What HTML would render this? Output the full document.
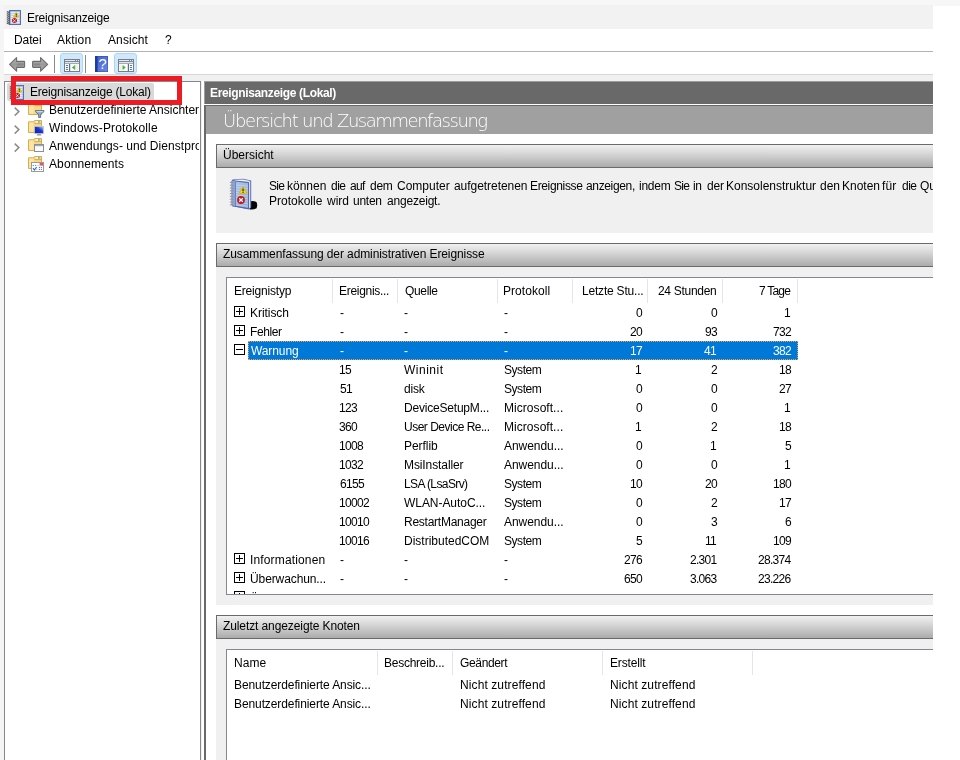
<!DOCTYPE html>
<html lang="de">
<head>
<meta charset="utf-8">
<title>Ereignisanzeige</title>
<style>
html,body{margin:0;padding:0;background:#fff;}
body{width:960px;height:760px;overflow:hidden;font-family:'Liberation Sans',sans-serif;font-size:12px;line-height:16px;color:#000;}
#app{position:relative;will-change:transform;width:960px;height:760px;overflow:hidden;background:#fff;}
#app div, #app i, #app svg, #app span.w{position:absolute;}
.t{white-space:nowrap;}
#topstrip{left:0;top:0;width:960px;height:6px;background:#f7f7f7;}
#leftstrip{left:0;top:5px;width:4px;height:755px;background:#f5f5f5;}
#win{left:4px;top:5px;width:929px;height:76px;background:#fff;}
#titlebar{left:0;top:0;width:929px;height:24px;background:#f2f2f2;}
#menubar{left:0;top:24px;width:929px;height:22px;background:#fff;border-bottom:1px solid #b2b2b2;}
#toolbar{left:0;top:47px;width:929px;height:22px;background:#fff;}
#band{left:0;top:69px;width:929px;height:7px;background:#f0f0f0;box-sizing:border-box;border-top:1px solid #d6d6d6;}
#tree{left:4px;top:81px;width:195px;height:700px;border:1px solid #828790;background:#fff;overflow:hidden;}
#treeclip{left:0;top:0;width:194px;height:700px;overflow:hidden;}
#treesel{left:2px;top:1px;width:147px;height:18px;background:#d9d9d9;border-radius:2px;}
#split{left:201px;top:81px;width:3px;height:679px;background:linear-gradient(to right,#f0f0f0 0,#f0f0f0 1px,#fff 1px);}
#right{left:204px;top:81px;width:729px;height:679px;background:#fff;overflow:hidden;}
#rhead{left:0;top:0;width:729px;height:23px;background:#696969;box-sizing:border-box;border-left:1px solid #9c9c9c;border-top:1px solid #9c9c9c;}
#rline{left:0;top:23px;width:729px;height:1px;background:#fff;}
#rbody{left:0;top:24px;width:729px;height:655px;border-left:2px solid #696969;border-top:1px solid #696969;box-sizing:border-box;background:#fff;}
#rtitle{left:2px;top:25px;width:727px;height:28px;background:#a0a0a0;}
.shead{left:12px;width:740px;height:22px;border:1px solid #6a6a6a;background:linear-gradient(to bottom,#f1f1f1 0%,#cfcfcf 50%,#ababab 100%);}
.sbody{left:12px;width:740px;background:#f0f0f0;}
.lv{left:22px;width:740px;border:1px solid #828790;background:#fff;overflow:hidden;}
.sep{width:1px;background:#e5e5e5;}
#selrow{left:21px;top:63px;width:550px;height:19px;background:#0078d7;box-sizing:border-box;border:1px dotted #e8a15a;}
.xb{width:9px;height:9px;border:1px solid #000;background:#fff;}
.xb .h{left:1px;top:4px;width:7px;height:1px;background:#000;}
.xb .v{left:4px;top:1px;width:1px;height:7px;background:#000;}
#redbox{left:11px;top:76px;width:161px;height:19px;border:5px solid #ed1c24;}
.tsep{top:3px;width:1px;height:18px;background:#8a8a8a;}
.tbtn{top:1px;width:21px;height:19px;border:1px solid #a6d8ff;border-radius:3px;background:#cfe8fc;}

</style>
</head>
<body>
<div id="app">
<div id="topstrip"></div>
<div id="leftstrip"></div>
<div id="win">
<div id="titlebar"></div>
<div id="menubar"></div>
<div id="toolbar">
<svg style="left:5px;top:5px" width="17" height="15" viewBox="0 0 17 15" ><defs><linearGradient id="ag1" x1="0" y1="0" x2="0" y2="1"><stop offset="0" stop-color="#b6b6b6"/><stop offset=".5" stop-color="#9a9a9a"/><stop offset="1" stop-color="#ababab"/></linearGradient></defs><g ><path d="M0.6 7.4 L7.6 0.6 L7.6 4.4 L15 4.4 Q15.6 4.4 15.6 5 L15.6 9.8 Q15.6 10.4 15 10.4 L7.6 10.4 L7.6 14.2 Z" fill="url(#ag1)" stroke="#6c6c6c" stroke-width="1.1" stroke-linejoin="round"/><rect x="8" y="6.4" width="6.4" height="2" fill="#7b7b7b" opacity=".6"/></g></svg><svg style="left:28px;top:5px" width="17" height="15" viewBox="0 0 17 15" ><defs><linearGradient id="ag0" x1="0" y1="0" x2="0" y2="1"><stop offset="0" stop-color="#b6b6b6"/><stop offset=".5" stop-color="#9a9a9a"/><stop offset="1" stop-color="#ababab"/></linearGradient></defs><g transform="translate(16.2,0) scale(-1,1)"><path d="M0.6 7.4 L7.6 0.6 L7.6 4.4 L15 4.4 Q15.6 4.4 15.6 5 L15.6 9.8 Q15.6 10.4 15 10.4 L7.6 10.4 L7.6 14.2 Z" fill="url(#ag0)" stroke="#6c6c6c" stroke-width="1.1" stroke-linejoin="round"/><rect x="8" y="6.4" width="6.4" height="2" fill="#7b7b7b" opacity=".6"/></g></svg><div class="tsep" style="left:50px"></div><div class="tbtn" style="left:56px"></div><svg style="left:60px;top:7px" width="16" height="13" viewBox="0 0 16 13" ><rect x="0.5" y="0.5" width="15" height="12" fill="#fff" stroke="#7d7d7d"/><rect x="1" y="1" width="14" height="1.2" fill="#e6e9ee"/><rect x="1" y="2.2" width="14" height="1" fill="#5d6d8e"/><rect x="1" y="3.2" width="14" height="1" fill="#dfe3ea"/><rect x="1" y="4.2" width="14" height=".8" fill="#8e98ac"/><rect x="11" y="1" width="1" height="1.2" fill="#7d88a3"/><rect x="13" y="1" width="1" height="1.2" fill="#7d88a3"/><rect x="5" y="5" width="1.2" height="7" fill="#5d6d8e"/><rect x="1.8" y="5.9" width="2.4" height="1.1" rx=".5" fill="#3a7bc8"/><rect x="1.8" y="7.9" width="2.4" height="1.1" rx=".5" fill="#3a7bc8"/><rect x="1.8" y="9.9" width="2.4" height="1.1" rx=".5" fill="#3a7bc8"/><rect x="10.6" y="5.4" width="3.6" height="6" fill="#f0f0f0"/><path d="M10.8 6.4 L10.8 10.6 L8.2 8.5 Z" fill="#3ab535" stroke="#3ab535" stroke-width=".5" stroke-linejoin="round"/></svg><div class="tsep" style="left:81px"></div><svg style="left:91px;top:4px" width="13" height="16" viewBox="0 0 13 16" ><defs><linearGradient id="hg" x1="0" y1="0" x2="1" y2="1"><stop offset="0" stop-color="#3f60cf"/><stop offset="1" stop-color="#6c8ae0"/></linearGradient></defs><rect x="0" y="0" width="13" height="16" fill="url(#hg)"/><rect x="0" y="0" width="2.6" height="16" fill="#1c3aa4"/><rect x="0" y="0" width="13" height="16" fill="none" stroke="#2440a8" stroke-width=".8"/><text x="7.6" y="13.2" font-family="Liberation Sans, sans-serif" font-size="15" fill="#fff" text-anchor="middle">?</text></svg><div class="tbtn" style="left:110px"></div><svg style="left:114px;top:7px" width="16" height="13" viewBox="0 0 16 13" ><rect x="0.5" y="0.5" width="15" height="12" fill="#fff" stroke="#7d7d7d"/><rect x="1" y="1" width="14" height="1.2" fill="#e6e9ee"/><rect x="1" y="2.2" width="14" height="1" fill="#5d6d8e"/><rect x="1" y="3.2" width="14" height="1" fill="#dfe3ea"/><rect x="1" y="4.2" width="14" height=".8" fill="#8e98ac"/><rect x="11" y="1" width="1" height="1.2" fill="#7d88a3"/><rect x="13" y="1" width="1" height="1.2" fill="#7d88a3"/><rect x="9.8" y="5" width="1.2" height="7" fill="#5d6d8e"/><rect x="11.8" y="5.9" width="2.4" height="1.1" rx=".5" fill="#3a7bc8"/><rect x="11.8" y="7.9" width="2.4" height="1.1" rx=".5" fill="#3a7bc8"/><rect x="11.8" y="9.9" width="2.4" height="1.1" rx=".5" fill="#3a7bc8"/><rect x="1.4" y="5.4" width="2.4" height="6" fill="#f0f0f0"/><path d="M4.8 6.4 L4.8 10.6 L7.4 8.5 Z" fill="#3ab535" stroke="#3ab535" stroke-width=".5" stroke-linejoin="round"/></svg>
</div>
<div id="band"></div>
</div>
<svg style="left:6px;top:10px" width="16" height="16" viewBox="0 0 16 16" ><rect x="3" y="0" width="12" height="15" fill="#5c6ea8"/><rect x="4.2" y="1" width="9.8" height="13" fill="#a4bfe8"/><rect x="4.8" y="2.2" width="8.6" height="1.1" fill="#ffffff" opacity=".9"/><rect x="4.8" y="4.2" width="8.6" height="1.1" fill="#ffffff" opacity=".9"/><rect x="4.8" y="6.2" width="8.6" height="1.1" fill="#ffffff" opacity=".9"/><rect x="4.8" y="8.2" width="8.6" height="1.1" fill="#ffffff" opacity=".9"/><rect x="4.8" y="10.2" width="8.6" height="1.1" fill="#ffffff" opacity=".9"/><rect x="4.8" y="12.2" width="8.6" height="1.1" fill="#ffffff" opacity=".9"/><path d="M0.8 1.6 L3.8 2.6" stroke="#5a5a5a" stroke-width="1.15" fill="none"/><path d="M0.8 3.6 L3.8 4.6" stroke="#5a5a5a" stroke-width="1.15" fill="none"/><path d="M0.8 5.6 L3.8 6.6" stroke="#5a5a5a" stroke-width="1.15" fill="none"/><path d="M0.8 7.6 L3.8 8.6" stroke="#5a5a5a" stroke-width="1.15" fill="none"/><path d="M0.8 9.6 L3.8 10.6" stroke="#5a5a5a" stroke-width="1.15" fill="none"/><path d="M0.8 11.6 L3.8 12.6" stroke="#5a5a5a" stroke-width="1.15" fill="none"/><path d="M0.8 13.2 L3.8 14.2" stroke="#5a5a5a" stroke-width="1.15" fill="none"/><path d="M10.2 2.2 L12.9 7 L7.5 7 Z" fill="#f2d319" stroke="#e0bd10" stroke-width=".8" stroke-linejoin="round"/><rect x="9.8" y="3.6" width=".9" height="2" fill="#1a1a1a"/><rect x="9.8" y="6" width=".9" height=".8" fill="#1a1a1a"/><circle cx="8.5" cy="10.6" r="2.5" fill="#c8141e"/><path d="M7.3 9.6 L9.5 11.7 M9.5 9.6 L7.3 11.7" stroke="#fff" stroke-width="1" fill="none"/></svg>
<div class="t" style="top:10px;left:27px;letter-spacing:-0.20px;">Ereignisanzeige</div>
<div class="t" style="top:32px;left:14px;letter-spacing:-0.10px;">Datei</div>
<div class="t" style="top:32px;left:57px;letter-spacing:0.15px;">Aktion</div>
<div class="t" style="top:32px;left:108px;letter-spacing:0.10px;">Ansicht</div>
<div class="t" style="top:32px;left:165px;">?</div>
<div id="tree">
<div id="treeclip">
<div id="treesel"></div>
<svg style="left:4px;top:3px" width="16" height="16" viewBox="0 0 16 16" ><rect x="3" y="0" width="12" height="15" fill="#5c6ea8"/><rect x="4.2" y="1" width="9.8" height="13" fill="#a4bfe8"/><rect x="4.8" y="2.2" width="8.6" height="1.1" fill="#ffffff" opacity=".9"/><rect x="4.8" y="4.2" width="8.6" height="1.1" fill="#ffffff" opacity=".9"/><rect x="4.8" y="6.2" width="8.6" height="1.1" fill="#ffffff" opacity=".9"/><rect x="4.8" y="8.2" width="8.6" height="1.1" fill="#ffffff" opacity=".9"/><rect x="4.8" y="10.2" width="8.6" height="1.1" fill="#ffffff" opacity=".9"/><rect x="4.8" y="12.2" width="8.6" height="1.1" fill="#ffffff" opacity=".9"/><path d="M0.8 1.6 L3.8 2.6" stroke="#5a5a5a" stroke-width="1.15" fill="none"/><path d="M0.8 3.6 L3.8 4.6" stroke="#5a5a5a" stroke-width="1.15" fill="none"/><path d="M0.8 5.6 L3.8 6.6" stroke="#5a5a5a" stroke-width="1.15" fill="none"/><path d="M0.8 7.6 L3.8 8.6" stroke="#5a5a5a" stroke-width="1.15" fill="none"/><path d="M0.8 9.6 L3.8 10.6" stroke="#5a5a5a" stroke-width="1.15" fill="none"/><path d="M0.8 11.6 L3.8 12.6" stroke="#5a5a5a" stroke-width="1.15" fill="none"/><path d="M0.8 13.2 L3.8 14.2" stroke="#5a5a5a" stroke-width="1.15" fill="none"/><path d="M10.2 2.2 L12.9 7 L7.5 7 Z" fill="#f2d319" stroke="#e0bd10" stroke-width=".8" stroke-linejoin="round"/><rect x="9.8" y="3.6" width=".9" height="2" fill="#1a1a1a"/><rect x="9.8" y="6" width=".9" height=".8" fill="#1a1a1a"/><circle cx="8.5" cy="10.6" r="2.5" fill="#c8141e"/><path d="M7.3 9.6 L9.5 11.7 M9.5 9.6 L7.3 11.7" stroke="#fff" stroke-width="1" fill="none"/></svg><svg style="left:9px;top:25px" width="6" height="10" viewBox="0 0 6 10" ><path d="M0.7 0.6 L4.9 4.6 L0.7 8.6" fill="none" stroke="#8c8c8c" stroke-width="1.5"/></svg><svg style="left:23px;top:20px" width="14" height="13" viewBox="0 0 14 13" ><path d="M0.5 1.8 L6 1.8 L6.6 0.5 L13.5 0.5 L13.5 12.5 L0.5 12.5 Z" fill="#f6d887" stroke="#d6ae4c" stroke-width="1"/><path d="M1.2 2.6 L5.6 2.6 L5.6 11.8 L1.2 11.8 Z" fill="#fbe6a6"/><path d="M6.4 3.6 L13 3.6" stroke="#d6ae4c" stroke-width="1"/><rect x="7.6" y="1.2" width="4.2" height="1.3" rx=".6" fill="#fff"/><rect x="10" y="1.2" width="1.8" height="1.3" rx=".6" fill="#2f8be0"/></svg><svg style="left:30px;top:28px" width="10" height="8" viewBox="0 0 10 8" ><path d="M0.4 0.6 L9 0.6 L9 1.6 L5.6 4.6 L5.6 7.6 L3.6 7.6 L3.6 4.6 L0.4 1.6 Z" fill="#93adc8" stroke="#50708f" stroke-width=".9" stroke-linejoin="round"/><path d="M1.6 1.6 L7.8 1.6" stroke="#e6eef6" stroke-width=".8"/></svg><svg style="left:9px;top:43px" width="6" height="10" viewBox="0 0 6 10" ><path d="M0.7 0.6 L4.9 4.6 L0.7 8.6" fill="none" stroke="#8c8c8c" stroke-width="1.5"/></svg><svg style="left:23px;top:38px" width="14" height="13" viewBox="0 0 14 13" ><path d="M0.5 1.8 L6 1.8 L6.6 0.5 L13.5 0.5 L13.5 12.5 L0.5 12.5 Z" fill="#f6d887" stroke="#d6ae4c" stroke-width="1"/><path d="M1.2 2.6 L5.6 2.6 L5.6 11.8 L1.2 11.8 Z" fill="#fbe6a6"/><path d="M6.4 3.6 L13 3.6" stroke="#d6ae4c" stroke-width="1"/><rect x="7.6" y="1.2" width="4.2" height="1.3" rx=".6" fill="#fff"/><rect x="10" y="1.2" width="1.8" height="1.3" rx=".6" fill="#2f8be0"/></svg><svg style="left:29px;top:44px" width="10" height="10" viewBox="0 0 10 10" ><defs><linearGradient id="mg" x1="0" y1="1" x2="1" y2="0"><stop offset="0" stop-color="#0a1fb0"/><stop offset=".55" stop-color="#1a36d0"/><stop offset="1" stop-color="#c8dcf8"/></linearGradient></defs><rect x="0.4" y="0.4" width="9.2" height="7.2" fill="url(#mg)" stroke="#c4c8cc" stroke-width=".8"/><path d="M3.6 8 L6.6 8 L7.6 9.4 L2.4 9.4 Z" fill="#9a9a9a"/></svg><svg style="left:9px;top:61px" width="6" height="10" viewBox="0 0 6 10" ><path d="M0.7 0.6 L4.9 4.6 L0.7 8.6" fill="none" stroke="#8c8c8c" stroke-width="1.5"/></svg><svg style="left:23px;top:56px" width="14" height="13" viewBox="0 0 14 13" ><path d="M0.5 1.8 L6 1.8 L6.6 0.5 L13.5 0.5 L13.5 12.5 L0.5 12.5 Z" fill="#f6d887" stroke="#d6ae4c" stroke-width="1"/><path d="M1.2 2.6 L5.6 2.6 L5.6 11.8 L1.2 11.8 Z" fill="#fbe6a6"/><path d="M6.4 3.6 L13 3.6" stroke="#d6ae4c" stroke-width="1"/><rect x="7.6" y="1.2" width="4.2" height="1.3" rx=".6" fill="#fff"/><rect x="10" y="1.2" width="1.8" height="1.3" rx=".6" fill="#2f8be0"/></svg><svg style="left:29px;top:62px" width="10" height="8" viewBox="0 0 10 8" ><rect x="0.5" y="0.5" width="9" height="7" fill="#fbfbfb" stroke="#8a8f9b" stroke-width="1"/><rect x="1" y="1" width="8" height="1.2" fill="#a3a9b8"/></svg><svg style="left:23px;top:74px" width="14" height="13" viewBox="0 0 14 13" ><path d="M0.5 1.8 L6 1.8 L6.6 0.5 L13.5 0.5 L13.5 12.5 L0.5 12.5 Z" fill="#f6d887" stroke="#d6ae4c" stroke-width="1"/><path d="M1.2 2.6 L5.6 2.6 L5.6 11.8 L1.2 11.8 Z" fill="#fbe6a6"/><path d="M6.4 3.6 L13 3.6" stroke="#d6ae4c" stroke-width="1"/><rect x="7.6" y="1.2" width="4.2" height="1.3" rx=".6" fill="#fff"/><rect x="10" y="1.2" width="1.8" height="1.3" rx=".6" fill="#2f8be0"/></svg><svg style="left:26px;top:80px" width="13" height="10" viewBox="0 0 13 10" ><rect x="0.5" y="0.5" width="12" height="9" fill="#fff" stroke="#9a9a9a" stroke-width="1"/><rect x="8.6" y="1" width="3.4" height="2.6" fill="#f05058"/><rect x="1.7000000000000002" y="2.9" width="1.1" height="1.1" fill="#2a86d8"/><rect x="4.1" y="2.9" width="1.1" height="1.1" fill="#7a7ab0"/><rect x="6.5" y="2.9" width="1.1" height="1.1" fill="#c0c0d0"/><rect x="7.9" y="4.9" width="1.1" height="1.1" fill="#2a86d8"/><rect x="9.9" y="4.9" width="1.1" height="1.1" fill="#7a7ab0"/><rect x="7.9" y="6.9" width="1.1" height="1.1" fill="#2a86d8"/><rect x="9.9" y="6.9" width="1.1" height="1.1" fill="#7a7ab0"/><rect x="5.1" y="6.7" width="1.1" height="1.1" fill="#c0c0d0"/><path d="M2 6.2 L3.4 8 L5.6 5" fill="none" stroke="#1f6fd0" stroke-width="1.1"/></svg>
<div class="t" style="top:2px;left:25px;letter-spacing:-0.20px;">Ereignisanzeige (Lokal)</div>
<div class="t" style="top:20px;left:44px;">Benutzerdefinierte Ansichten</div>
<div class="t" style="top:38px;left:44px;letter-spacing:0.15px;">Windows-Protokolle</div>
<div class="t" style="top:56px;left:44px;letter-spacing:0.05px;">Anwendungs- und Dienstprotokolle</div>
<div class="t" style="top:74px;left:44px;letter-spacing:0.10px;">Abonnements</div>
</div>
</div>
<div id="split"></div>
<div id="right">
<div id="rhead"></div>
<div id="rline"></div>
<div id="rbody"></div>
<div id="rtitle"></div>
<div class="shead" style="top:63px"></div>
<div class="sbody" style="top:87px;height:65px"></div>
<div class="shead" style="top:162px"></div>
<div class="sbody" style="top:186px;height:338px"></div>
<div class="shead" style="top:534px"></div>
<div class="sbody" style="top:558px;height:130px"></div>
<svg style="left:25px;top:97px" width="30" height="34" viewBox="0 0 30 34" ><defs><linearGradient id="ng" x1="0" y1="0" x2="1" y2="1"><stop offset="0" stop-color="#b0c8ea"/><stop offset="1" stop-color="#8facd8"/></linearGradient></defs><path d="M20.5 23.5 Q24 22 27.6 24.2 Q28.8 27.6 27.4 30.6 Q24 31.8 20.5 31.2 Z" fill="#050505"/><path d="M3.4 1.4 L14 0.8 L22.2 2.4 L22.2 29.6 L20 31.4 L3.4 28.2 Z" fill="#5a6db2"/><path d="M5 2 L13.8 1.6 L21 3 L20 4 L5.6 3 Z" fill="#f4f6fa"/><path d="M19.8 4 L21.2 3.2 L21.2 29.4 L19.8 30.4 Z" fill="#e8ecf4"/><path d="M3 2.6 L19.6 4.6 L19.6 30.6 L3 27.6 Z" fill="url(#ng)" stroke="#5466aa" stroke-width="1" stroke-linejoin="round"/><path d="M3.2 2.8 L6.4 3.2 L6.4 28.2 L3.2 27.6 Z" fill="#90a8d8"/><path d="M6.4 3.2 L6.4 28" stroke="#6078b8" stroke-width=".9"/><path d="M7 7.0 L19 8.2" stroke="#d3e0f3" stroke-width=".7" opacity=".8"/><path d="M7 9.5 L19 10.7" stroke="#d3e0f3" stroke-width=".7" opacity=".8"/><path d="M7 12.0 L19 13.2" stroke="#d3e0f3" stroke-width=".7" opacity=".8"/><path d="M7 14.5 L19 15.7" stroke="#d3e0f3" stroke-width=".7" opacity=".8"/><path d="M7 17.0 L19 18.2" stroke="#d3e0f3" stroke-width=".7" opacity=".8"/><path d="M7 19.5 L19 20.7" stroke="#d3e0f3" stroke-width=".7" opacity=".8"/><path d="M7 22.0 L19 23.2" stroke="#d3e0f3" stroke-width=".7" opacity=".8"/><path d="M7 24.5 L19 25.7" stroke="#d3e0f3" stroke-width=".7" opacity=".8"/><path d="M7 27.0 L19 28.2" stroke="#d3e0f3" stroke-width=".7" opacity=".8"/><path d="M0.8 4.6 Q2.6 3.6 4.6 4.8" stroke="#8c8c8c" stroke-width=".9" fill="none"/><path d="M0.8 7.3999999999999995 Q2.6 6.3999999999999995 4.6 7.6" stroke="#8c8c8c" stroke-width=".9" fill="none"/><path d="M0.8 10.2 Q2.6 9.2 4.6 10.4" stroke="#8c8c8c" stroke-width=".9" fill="none"/><path d="M0.8 12.999999999999998 Q2.6 11.999999999999998 4.6 13.2" stroke="#8c8c8c" stroke-width=".9" fill="none"/><path d="M0.8 15.799999999999999 Q2.6 14.799999999999999 4.6 16.0" stroke="#8c8c8c" stroke-width=".9" fill="none"/><path d="M0.8 18.6 Q2.6 17.6 4.6 18.8" stroke="#8c8c8c" stroke-width=".9" fill="none"/><path d="M0.8 21.4 Q2.6 20.4 4.6 21.599999999999998" stroke="#8c8c8c" stroke-width=".9" fill="none"/><path d="M0.8 24.2 Q2.6 23.2 4.6 24.4" stroke="#8c8c8c" stroke-width=".9" fill="none"/><path d="M0.8 27.0 Q2.6 26.0 4.6 27.2" stroke="#8c8c8c" stroke-width=".9" fill="none"/><path d="M14 8.6 L17.8 15.4 L10.2 15.4 Z" fill="#f4d820" stroke="#d9b510" stroke-width="1" stroke-linejoin="round"/><rect x="13.5" y="10.6" width="1.1" height="2.6" fill="#111"/><rect x="13.5" y="13.8" width="1.1" height="1" fill="#111"/><circle cx="12" cy="22" r="3.9" fill="#c4161f"/><path d="M10.2 20.2 L13.8 23.8 M13.8 20.2 L10.2 23.8" stroke="#fff" stroke-width="1.3"/></svg>
<div class="lv" style="top:196px;height:316px">
<div class="sep" style="left:105px;top:1px;height:24px"></div>
<div class="sep" style="left:170px;top:1px;height:24px"></div>
<div class="sep" style="left:270px;top:1px;height:24px"></div>
<div class="sep" style="left:345px;top:1px;height:24px"></div>
<div class="sep" style="left:420px;top:1px;height:24px"></div>
<div class="sep" style="left:495px;top:1px;height:24px"></div>
<div class="sep" style="left:570px;top:1px;height:24px"></div>
<div id="selrow"></div>
<div class="xb" style="left:7px;top:28px"><i class="h"></i><i class="v"></i></div>
<div class="xb" style="left:7px;top:47px"><i class="h"></i><i class="v"></i></div>
<div class="xb" style="left:7px;top:66px"><i class="h"></i></div>
<div class="xb" style="left:7px;top:275px"><i class="h"></i><i class="v"></i></div>
<div class="xb" style="left:7px;top:294px"><i class="h"></i><i class="v"></i></div>
<div class="xb" style="left:7px;top:313px"><i class="h"></i><i class="v"></i></div>
<div class="t" style="top:5px;left:7px;letter-spacing:-0.20px;">Ereignistyp</div>
<div class="t" style="top:5px;left:112px;letter-spacing:-0.30px;">Ereignis...</div>
<div class="t" style="top:5px;left:178px;letter-spacing:-0.35px;">Quelle</div>
<div class="t" style="top:5px;left:276px;letter-spacing:0.05px;">Protokoll</div>
<div class="t" style="top:5px;left:355px;letter-spacing:-0.20px;">Letzte Stu...</div>
<div class="t" style="top:5px;left:431px;letter-spacing:-0.30px;">24 Stunden</div>
<div class="t" style="top:5px;left:532px;letter-spacing:-0.80px;">7 Tage</div>
<div class="t" style="top:27px;left:23px;letter-spacing:-0.05px;">Kritisch</div>
<div class="t" style="top:27px;left:113px;">-</div>
<div class="t" style="top:27px;left:177px;">-</div>
<div class="t" style="top:27px;left:277px;">-</div>
<div class="t" style="top:27px;left:409px;letter-spacing:-0.70px;">0</div>
<div class="t" style="top:27px;left:484px;letter-spacing:-0.70px;">0</div>
<div class="t" style="top:27px;left:557px;letter-spacing:-0.70px;">1</div>
<div class="t" style="top:46px;left:23px;letter-spacing:-0.40px;">Fehler</div>
<div class="t" style="top:46px;left:113px;">-</div>
<div class="t" style="top:46px;left:177px;">-</div>
<div class="t" style="top:46px;left:277px;">-</div>
<div class="t" style="top:46px;left:403px;letter-spacing:-0.70px;">20</div>
<div class="t" style="top:46px;left:478px;letter-spacing:-0.70px;">93</div>
<div class="t" style="top:46px;left:546px;letter-spacing:-0.70px;">732</div>
<div class="t" style="top:65px;left:24px;letter-spacing:-0.10px;color:#fff;">Warnung</div>
<div class="t" style="top:65px;left:113px;color:#fff;">-</div>
<div class="t" style="top:65px;left:177px;color:#fff;">-</div>
<div class="t" style="top:65px;left:277px;color:#fff;">-</div>
<div class="t" style="top:65px;left:403px;letter-spacing:-0.70px;color:#fff;">17</div>
<div class="t" style="top:65px;left:477px;letter-spacing:-0.70px;color:#fff;">41</div>
<div class="t" style="top:65px;left:546px;letter-spacing:-0.70px;color:#fff;">382</div>
<div class="t" style="top:84px;left:112px;letter-spacing:-0.70px;">15</div>
<div class="t" style="top:84px;left:177px;letter-spacing:0.50px;">Wininit</div>
<div class="t" style="top:84px;left:277px;letter-spacing:-0.45px;">System</div>
<div class="t" style="top:84px;left:408px;letter-spacing:-0.70px;">1</div>
<div class="t" style="top:84px;left:484px;letter-spacing:-0.70px;">2</div>
<div class="t" style="top:84px;left:552px;letter-spacing:-0.70px;">18</div>
<div class="t" style="top:103px;left:113px;letter-spacing:-0.70px;">51</div>
<div class="t" style="top:103px;left:177px;letter-spacing:-0.20px;">disk</div>
<div class="t" style="top:103px;left:277px;letter-spacing:-0.45px;">System</div>
<div class="t" style="top:103px;left:409px;letter-spacing:-0.70px;">0</div>
<div class="t" style="top:103px;left:484px;letter-spacing:-0.70px;">0</div>
<div class="t" style="top:103px;left:552px;letter-spacing:-0.70px;">27</div>
<div class="t" style="top:122px;left:112px;letter-spacing:-0.70px;">123</div>
<div class="t" style="top:122px;left:177px;letter-spacing:-0.20px;">DeviceSetupM...</div>
<div class="t" style="top:122px;left:277px;letter-spacing:0.05px;">Microsoft...</div>
<div class="t" style="top:122px;left:409px;letter-spacing:-0.70px;">0</div>
<div class="t" style="top:122px;left:484px;letter-spacing:-0.70px;">0</div>
<div class="t" style="top:122px;left:557px;letter-spacing:-0.70px;">1</div>
<div class="t" style="top:141px;left:112px;letter-spacing:-0.70px;">360</div>
<div class="t" style="top:141px;left:177px;letter-spacing:-0.50px;">User Device Re...</div>
<div class="t" style="top:141px;left:277px;letter-spacing:0.05px;">Microsoft...</div>
<div class="t" style="top:141px;left:408px;letter-spacing:-0.70px;">1</div>
<div class="t" style="top:141px;left:484px;letter-spacing:-0.70px;">2</div>
<div class="t" style="top:141px;left:552px;letter-spacing:-0.70px;">18</div>
<div class="t" style="top:160px;left:112px;letter-spacing:-0.70px;">1008</div>
<div class="t" style="top:160px;left:177px;letter-spacing:-0.05px;">Perflib</div>
<div class="t" style="top:160px;left:277px;letter-spacing:-0.05px;">Anwendu...</div>
<div class="t" style="top:160px;left:409px;letter-spacing:-0.70px;">0</div>
<div class="t" style="top:160px;left:483px;letter-spacing:-0.70px;">1</div>
<div class="t" style="top:160px;left:558px;letter-spacing:-0.70px;">5</div>
<div class="t" style="top:179px;left:112px;letter-spacing:-0.70px;">1032</div>
<div class="t" style="top:179px;left:177px;letter-spacing:-0.10px;">MsiInstaller</div>
<div class="t" style="top:179px;left:277px;letter-spacing:-0.05px;">Anwendu...</div>
<div class="t" style="top:179px;left:409px;letter-spacing:-0.70px;">0</div>
<div class="t" style="top:179px;left:484px;letter-spacing:-0.70px;">0</div>
<div class="t" style="top:179px;left:557px;letter-spacing:-0.70px;">1</div>
<div class="t" style="top:198px;left:113px;letter-spacing:-0.70px;">6155</div>
<div class="t" style="top:198px;left:177px;letter-spacing:-0.60px;">LSA (LsaSrv)</div>
<div class="t" style="top:198px;left:277px;letter-spacing:-0.45px;">System</div>
<div class="t" style="top:198px;left:403px;letter-spacing:-0.70px;">10</div>
<div class="t" style="top:198px;left:478px;letter-spacing:-0.70px;">20</div>
<div class="t" style="top:198px;left:546px;letter-spacing:-0.70px;">180</div>
<div class="t" style="top:217px;left:112px;letter-spacing:-0.70px;">10002</div>
<div class="t" style="top:217px;left:177px;letter-spacing:-0.05px;">WLAN-AutoC...</div>
<div class="t" style="top:217px;left:277px;letter-spacing:-0.45px;">System</div>
<div class="t" style="top:217px;left:409px;letter-spacing:-0.70px;">0</div>
<div class="t" style="top:217px;left:484px;letter-spacing:-0.70px;">2</div>
<div class="t" style="top:217px;left:552px;letter-spacing:-0.70px;">17</div>
<div class="t" style="top:236px;left:112px;letter-spacing:-0.70px;">10010</div>
<div class="t" style="top:236px;left:177px;letter-spacing:-0.25px;">RestartManager</div>
<div class="t" style="top:236px;left:277px;letter-spacing:-0.05px;">Anwendu...</div>
<div class="t" style="top:236px;left:409px;letter-spacing:-0.70px;">0</div>
<div class="t" style="top:236px;left:484px;letter-spacing:-0.70px;">3</div>
<div class="t" style="top:236px;left:558px;letter-spacing:-0.70px;">6</div>
<div class="t" style="top:255px;left:112px;letter-spacing:-0.70px;">10016</div>
<div class="t" style="top:255px;left:177px;">DistributedCOM</div>
<div class="t" style="top:255px;left:277px;letter-spacing:-0.45px;">System</div>
<div class="t" style="top:255px;left:409px;letter-spacing:-0.70px;">5</div>
<div class="t" style="top:255px;left:478px;letter-spacing:-0.70px;">11</div>
<div class="t" style="top:255px;left:546px;letter-spacing:-0.70px;">109</div>
<div class="t" style="top:274px;left:23px;letter-spacing:0.15px;">Informationen</div>
<div class="t" style="top:274px;left:113px;">-</div>
<div class="t" style="top:274px;left:177px;">-</div>
<div class="t" style="top:274px;left:277px;">-</div>
<div class="t" style="top:274px;left:397px;letter-spacing:-0.70px;">276</div>
<div class="t" style="top:274px;left:463px;letter-spacing:-0.70px;">2.301</div>
<div class="t" style="top:274px;left:531px;letter-spacing:-0.70px;">28.374</div>
<div class="t" style="top:293px;left:23px;letter-spacing:-0.10px;">Überwachun...</div>
<div class="t" style="top:293px;left:113px;">-</div>
<div class="t" style="top:293px;left:177px;">-</div>
<div class="t" style="top:293px;left:277px;">-</div>
<div class="t" style="top:293px;left:397px;letter-spacing:-0.70px;">650</div>
<div class="t" style="top:293px;left:463px;letter-spacing:-0.70px;">3.063</div>
<div class="t" style="top:293px;left:531px;letter-spacing:-0.70px;">23.226</div>
<div class="t" style="top:313px;left:23px;letter-spacing:-0.10px;">Überwachun...</div>
<div class="t" style="top:313px;left:113px;">-</div>
<div class="t" style="top:313px;left:177px;">-</div>
<div class="t" style="top:313px;left:277px;">-</div>
</div>
<div class="lv" style="top:568px;height:130px">
<div class="sep" style="left:150px;top:1px;height:24px"></div>
<div class="sep" style="left:225px;top:1px;height:24px"></div>
<div class="sep" style="left:375px;top:1px;height:24px"></div>
<div class="sep" style="left:525px;top:1px;height:24px"></div>
<div class="t" style="top:5px;left:7px;letter-spacing:0.05px;">Name</div>
<div class="t" style="top:5px;left:157px;letter-spacing:-0.25px;">Beschreib...</div>
<div class="t" style="top:5px;left:233px;letter-spacing:-0.35px;">Geändert</div>
<div class="t" style="top:5px;left:383px;letter-spacing:-0.15px;">Erstellt</div>
<div class="t" style="top:27px;left:7px;letter-spacing:-0.10px;">Benutzerdefinierte Ansic...</div>
<div class="t" style="top:27px;left:233px;letter-spacing:0.10px;">Nicht zutreffend</div>
<div class="t" style="top:27px;left:383px;letter-spacing:0.10px;">Nicht zutreffend</div>
<div class="t" style="top:46px;left:7px;letter-spacing:-0.10px;">Benutzerdefinierte Ansic...</div>
<div class="t" style="top:46px;left:233px;letter-spacing:0.10px;">Nicht zutreffend</div>
<div class="t" style="top:46px;left:383px;letter-spacing:0.10px;">Nicht zutreffend</div>
</div>
<div class="t" style="top:4px;left:6px;letter-spacing:-0.35px;font-weight:bold;color:#fff;">Ereignisanzeige (Lokal)</div>
<div class="t" style="top:66px;left:19px;">Übersicht</div>
<div class="t" style="top:165px;left:19px;letter-spacing:-0.10px;">Zusammenfassung der administrativen Ereignisse</div>
<div class="t" style="top:537px;left:19px;letter-spacing:-0.10px;">Zuletzt angezeigte Knoten</div>
<div class="t" style="top:28px;left:19px;font-size:18px;line-height:24px;font-weight:200;color:#ffffff;font-family:'DejaVu Sans', sans-serif;"><span class="w" style="left:0px;letter-spacing:-1.25px;">Übersicht und</span> <span class="w" style="left:114px;letter-spacing:-1.45px;">Zusammenfassung</span></div>
<div class="t" style="top:97px;left:65px;"><span class="w" style="left:0px;letter-spacing:-0.65px;">Sie</span> <span class="w" style="left:18px;">können</span> <span class="w" style="left:62px;letter-spacing:-0.50px;">die</span> <span class="w" style="left:81px;letter-spacing:-0.65px;">auf</span> <span class="w" style="left:101px;letter-spacing:-0.25px;">dem</span> <span class="w" style="left:128px;">Computer</span> <span class="w" style="left:185px;letter-spacing:-0.05px;">aufgetretenen</span> <span class="w" style="left:261px;letter-spacing:-0.35px;">Ereignisse</span> <span class="w" style="left:317px;letter-spacing:-0.35px;">anzeigen,</span> <span class="w" style="left:370px;letter-spacing:-0.25px;">indem</span> <span class="w" style="left:405px;letter-spacing:-0.65px;">Sie</span> <span class="w" style="left:424px;letter-spacing:-0.30px;">in</span> <span class="w" style="left:438px;letter-spacing:-0.15px;">der</span> <span class="w" style="left:457px;">Konsolenstruktur</span> <span class="w" style="left:551px;">den</span> <span class="w" style="left:573px;">Knoten</span> <span class="w" style="left:613px;letter-spacing:0.10px;">für</span> <span class="w" style="left:633px;letter-spacing:-0.50px;">die</span> <span class="w" style="left:651px;letter-spacing:-0.15px;">Quelle</span></div>
<div class="t" style="top:112px;left:65px;"><span class="w" style="left:0px;">Protokolle</span> <span class="w" style="left:58px;">wird</span> <span class="w" style="left:84px;letter-spacing:-0.25px;">unten</span> <span class="w" style="left:118px;letter-spacing:-0.20px;">angezeigt.</span></div>
</div>
<div id="redbox"></div>
</div>
</body>
</html>
